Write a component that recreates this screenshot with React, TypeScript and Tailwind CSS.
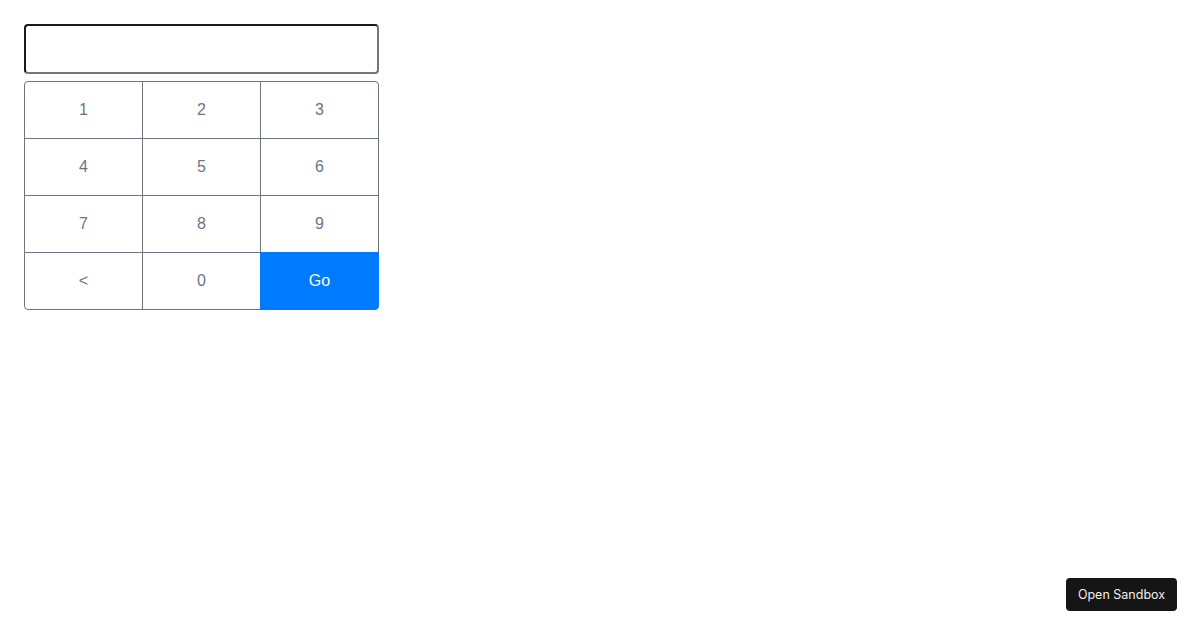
import React from "react";

const keys = ["1", "2", "3", "4", "5", "6", "7", "8", "9", "<", "0", "Go"];

export default function App() {
  return (
    <div className="w-[1200px] h-[630px] bg-white relative font-['Liberation_Sans',Arial,sans-serif]">
      <div className="pt-[24px] pl-[24px] flex flex-col gap-[7px] w-[403px]">
        <input
          className="w-[355px] h-[50px] rounded-[4px] border-2 border-t-[#1a1a1a] border-l-[#1a1a1a] border-r-[#767676] border-b-[#767676] outline-none px-2 text-base"
          type="text"
        />
        <div className="flex flex-wrap w-[355px]">
          {keys.map((k, i) => {
            const col = i % 3;
            const row = Math.floor(i / 3);
            const isGo = k === "Go";
            const cls = [
              "w-[119px] h-[58px] border flex items-center justify-center text-[16px]",
              col > 0 ? "-ml-px" : "",
              row > 0 ? "-mt-px" : "",
              isGo
                ? "bg-[#007bff] border-[#007bff] text-white relative z-10 rounded-br-[4px]"
                : "bg-white border-[#6c757d] text-[#6c757d]",
              i === 0 ? "rounded-tl-[4px]" : "",
              i === 2 ? "rounded-tr-[4px]" : "",
              i === 9 ? "rounded-bl-[4px]" : "",
            ].join(" ");
            return (
              <button key={k} className={cls}>
                {k}
              </button>
            );
          })}
        </div>
      </div>
      <button className="absolute left-[1066px] top-[578px] w-[111px] h-[33px] pt-[2px] rounded-[4px] bg-[#151515] text-[#f0f0f0] text-[12.5px] font-['Inter',sans-serif] flex items-center justify-center">
        Open Sandbox
      </button>
    </div>
  );
}
